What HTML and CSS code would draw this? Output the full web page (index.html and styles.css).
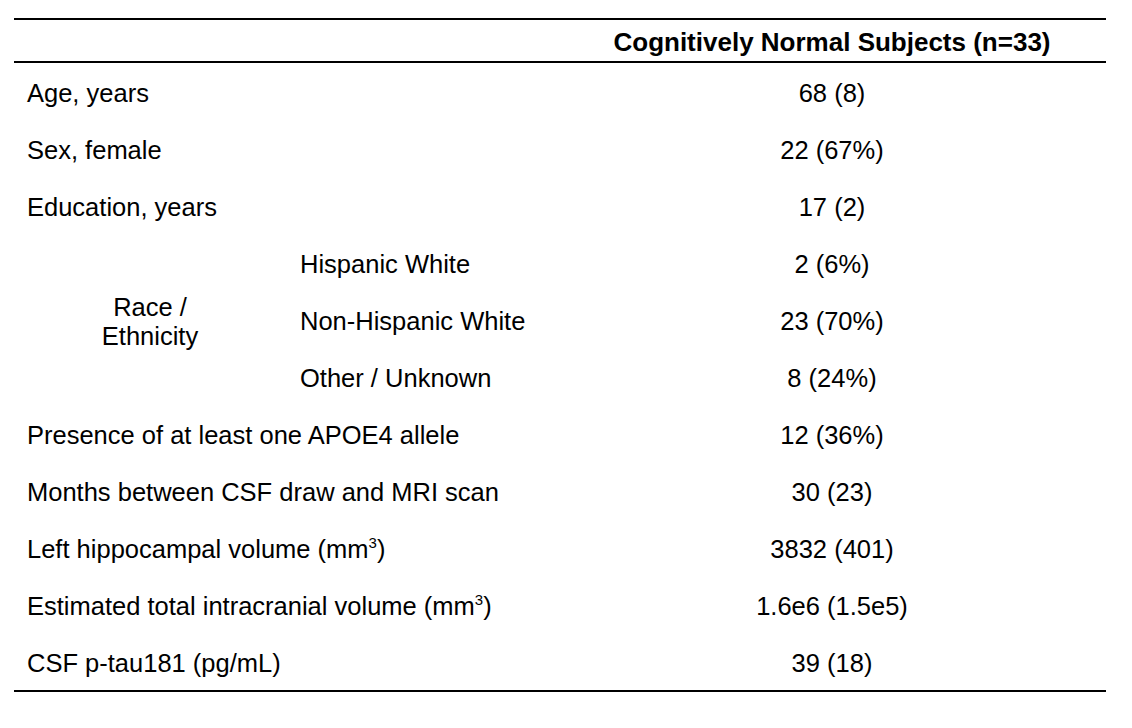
FILE: index.html
```html
<!DOCTYPE html>
<html lang="en">
<head>
<meta charset="utf-8">
<title>Cognitively Normal Subjects</title>
<link rel="stylesheet" href="styles.css">
</head>
<body>
<table class="demo">
  <colgroup>
    <col class="c-label">
    <col class="c-sub">
    <col class="c-val">
  </colgroup>
  <thead>
    <tr class="head-row">
      <th class="hcell"></th>
      <th class="hcell"></th>
      <th class="hcell val">Cognitively Normal Subjects (n=33)</th>
    </tr>
  </thead>
  <tbody>
    <tr class="row"><td class="label" colspan="2">Age, years</td><td class="val">68 (8)</td></tr>
    <tr class="row"><td class="label" colspan="2">Sex, female</td><td class="val">22 (67%)</td></tr>
    <tr class="row"><td class="label" colspan="2">Education, years</td><td class="val">17 (2)</td></tr>
    <tr class="row"><td class="group" rowspan="3">Race /<br>Ethnicity</td><td class="sub">Hispanic White</td><td class="val">2 (6%)</td></tr>
    <tr class="row"><td class="sub">Non-Hispanic White</td><td class="val">23 (70%)</td></tr>
    <tr class="row"><td class="sub">Other / Unknown</td><td class="val">8 (24%)</td></tr>
    <tr class="row"><td class="label" colspan="2">Presence of at least one APOE4 allele</td><td class="val">12 (36%)</td></tr>
    <tr class="row"><td class="label" colspan="2">Months between CSF draw and MRI scan</td><td class="val">30 (23)</td></tr>
    <tr class="row"><td class="label" colspan="2">Left hippocampal volume (mm<sup class="sup">3</sup>)</td><td class="val">3832 (401)</td></tr>
    <tr class="row"><td class="label" colspan="2">Estimated total intracranial volume (mm<sup class="sup">3</sup>)</td><td class="val">1.6e6 (1.5e5)</td></tr>
    <tr class="row last"><td class="label" colspan="2">CSF p-tau181 (pg/mL)</td><td class="val">39 (18)</td></tr>
  </tbody>
</table>
</body>
</html>
```
FILE: styles.css
```css
html, body {
  margin: 0;
  padding: 0;
  background: #ffffff;
}

body {
  font-family: "Liberation Sans", Arial, Helvetica, sans-serif;
  font-size: 25.5px;
  color: #000000;
}

.demo {
  margin: 18px 0 0 14px;
  width: 1092px;
  border-collapse: separate;
  border-spacing: 0;
  table-layout: fixed;
}

.c-label { width: 272px; }
.c-sub { width: 272px; }
.c-val { width: 548px; }

.hcell {
  border-top: 2px solid #000;
  border-bottom: 2px solid #000;
  padding: 4px 0 0 0;
  height: 37px;
  line-height: 37px;
  font-size: 26px;
  font-weight: bold;
  vertical-align: middle;
}

.row { height: 57px; }

.row td {
  padding: 4px 0 0 0;
  line-height: 29px;
  vertical-align: middle;
}

.row.last { height: 59px; }

.row.last td {
  border-bottom: 2px solid #000;
}

.label {
  text-align: left;
  padding-left: 13px !important;
  white-space: nowrap;
}

.group {
  text-align: center;
}

.sub {
  text-align: left;
  padding-left: 14px !important;
}

.val {
  text-align: center;
}

.sup {
  font-size: 15px;
  line-height: 0;
  vertical-align: 10px;
}
```
